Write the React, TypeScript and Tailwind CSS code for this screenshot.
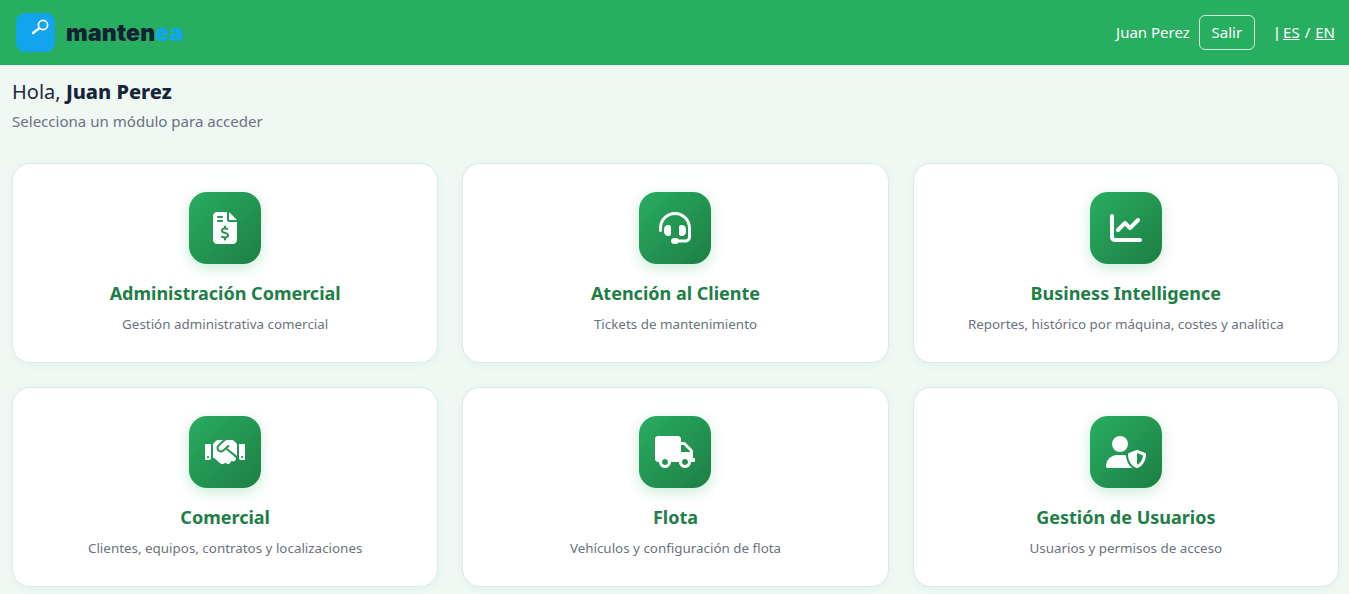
import React from 'react';
import { FaHandshake, FaTruck } from 'react-icons/fa';
import { FaChartLine, FaFileInvoiceDollar, FaHeadset, FaUserShield } from 'react-icons/fa6';

const modules = [
  { title: 'Administración Comercial', desc: 'Gestión administrativa comercial', icon: FaFileInvoiceDollar, size: 'w-[24px] h-[32px]' },
  { title: 'Atención al Cliente', desc: 'Tickets de mantenimiento', icon: FaHeadset, size: 'w-[32px] h-[32px]' },
  { title: 'Business Intelligence', desc: 'Reportes, histórico por máquina, costes y analítica', icon: FaChartLine, size: 'w-[32px] h-[32px]' },
  { title: 'Comercial', desc: 'Clientes, equipos, contratos y localizaciones', icon: FaHandshake, size: 'w-[40px] h-[32px]' },
  { title: 'Flota', desc: 'Vehículos y configuración de flota', icon: FaTruck, size: 'w-[40px] h-[32px]' },
  { title: 'Gestión de Usuarios', desc: 'Usuarios y permisos de acceso', icon: FaUserShield, size: 'w-[40px] h-[32px]' },
];

const App: React.FC = () => {
  return (
    <div className="min-h-screen bg-[#f0f8f4] font-['Noto_Sans',sans-serif] text-[#1f2937]">
      {/* Header */}
      <header className="h-[65px] bg-[#27ae60] flex items-center justify-between pl-4 pr-[14px]">
        <div className="flex items-center gap-[11px]">
          <div className="w-[39px] h-[39px] rounded-[9px] bg-[#12a5ee]">
            <svg width="39" height="39" viewBox="0 0 39 39" fill="none" stroke="white" strokeLinecap="round">
              <circle cx="27" cy="12" r="4.6" strokeWidth="1.7" />
              <path d="M23 15.5 17 20" strokeWidth="2.4" />
            </svg>
          </div>
          <div className="font-['Inter',sans-serif] font-black text-[23px] leading-none tracking-[0.2px] text-[#0f2233] mt-[2px]">
            manten<span className="text-[#12a5ee]">ea</span>
          </div>
        </div>
        <div className="flex items-center text-[15px] text-white">
          <span>Juan Perez</span>
          <button className="ml-[9px] h-[35px] w-[56px] rounded-[6px] border border-white/80 text-[15px] text-white">Salir</button>
          <span className="ml-[18px] font-bold text-white/80">|</span>
          <a className="ml-[2px] underline">ES</a>
          <span className="mx-[5px]">/</span>
          <a className="underline">EN</a>
        </div>
      </header>

      {/* Greeting */}
      <main className="pl-3 pr-[10px] pt-[14px]">
        <h1 className="text-[20px] leading-[25px]">
          Hola, <span className="font-extrabold text-[#17253a]">Juan Perez</span>
        </h1>
        <p className="mt-[7px] text-[15.05px] leading-[20px] text-[#6b7280]">Selecciona un módulo para acceder</p>

        {/* Modules */}
        <div className="grid grid-cols-3 gap-6 mt-[32px] pb-2">
          {modules.map((mod) => {
            const Icon = mod.icon;
            return (
              <div
                key={mod.title}
                className="h-[200px] bg-white rounded-[18px] border border-[#dcebe3] shadow-[0_2px_8px_rgba(39,174,96,0.08)] pt-[28px] flex flex-col items-center text-center"
              >
                <div className="w-[72px] h-[72px] rounded-[18px] bg-gradient-to-br from-[#27ae60] to-[#1e7e45] shadow-[0_4px_14px_rgba(39,174,96,0.25)] flex items-center justify-center text-white">
                  <Icon className={mod.size} />
                </div>
                <h2 className="mt-[17px] text-[18px] leading-[25px] font-bold text-[#1e7e45]">{mod.title}</h2>
                <p className="mt-[9px] text-[13.4px] leading-[18px] text-[#6b7280]">{mod.desc}</p>
              </div>
            );
          })}
        </div>
      </main>
    </div>
  );
};

export default App;
